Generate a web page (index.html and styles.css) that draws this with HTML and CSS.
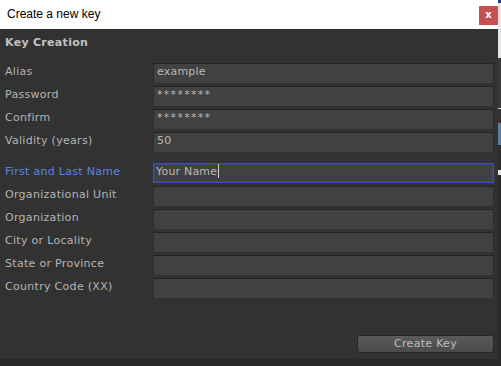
FILE: index.html
```html
<!DOCTYPE html>
<html lang="en">
<head>
  <meta charset="UTF-8" />
  <title>Create a new key</title>
  <link rel="stylesheet" href="styles.css">
</head>
<body>

<div class="desktop">
  <div class="window">
    <!-- Titelleiste -->
    <div class="titlebar">
      <span class="title">Create a new key</span>
      <div class="close" aria-label="Close">x</div>
    </div>

    <div class="content">
      <div class="section-title">Key Creation</div>

      <div class="row">
        <label>Alias</label>
        <div class="field">example</div>
      </div>
      <div class="row">
        <label>Password</label>
        <div class="field secret">********</div>
      </div>
      <div class="row">
        <label>Confirm</label>
        <div class="field secret">********</div>
      </div>
      <div class="row">
        <label>Validity (years)</label>
        <div class="field">50</div>
      </div>

      <div class="row spaced">
        <label class="active">First and Last Name</label>
        <div class="field focused">Your Name<span class="caret"></span></div>
      </div>
      <div class="row">
        <label>Organizational Unit</label>
        <div class="field"></div>
      </div>
      <div class="row">
        <label>Organization</label>
        <div class="field"></div>
      </div>
      <div class="row">
        <label>City or Locality</label>
        <div class="field"></div>
      </div>
      <div class="row">
        <label>State or Province</label>
        <div class="field"></div>
      </div>
      <div class="row">
        <label>Country Code (XX)</label>
        <div class="field"></div>
      </div>

      <div class="actions">
        <button class="btn">Create Key</button>
      </div>
    </div>

    <div class="bottom-edge"></div>
  </div>

  <!-- Fenster dahinter, schmaler Rand -->
  <div class="behind"></div>
</div>

</body>
</html>
```

FILE: styles.css
```css
* {
  box-sizing: border-box;
}
body {
  margin: 0;
  background: #2b2b2b;
  font-family: "DejaVu Sans", sans-serif;
  font-size: 11px;
}

.desktop {
  display: flex;
  height: 366px;
  width: 501px;
}

.window {
  width: 498px;
  display: flex;
  flex-direction: column;
}

.behind {
  width: 3px;
  background: linear-gradient(to bottom,
    #1b3c9a 0, #1b3c9a 3px,
    #e6e6e6 3px, #e6e6e6 58px,
    #3a3a3a 58px, #3a3a3a 108px,
    #d0d0d0 108px, #d0d0d0 109px,
    #333 109px, #333 123px,
    #5d7ea6 123px, #5d7ea6 145px,
    #2c2c2c 145px, #2c2c2c 170px,
    #e0e0e0 170px, #e0e0e0 175px,
    #2a2a2a 175px);
}

/* Titelleiste */
.titlebar {
  height: 29px;
  background: #fff;
  display: flex;
  align-items: flex-start;
  justify-content: space-between;
  padding-left: 7px;
}
.title {
  font-family: "Liberation Sans", Arial, sans-serif;
  font-size: 12px;
  color: #000;
  line-height: 16px;
  margin-top: 6px;
}
.close {
  width: 19px;
  height: 19px;
  margin-top: 6px;
  background: #c75050;
  color: #fff;
  font-family: "DejaVu Sans", sans-serif;
  font-weight: bold;
  font-size: 10px;
  line-height: 17px;
  text-align: center;
}

/* Inhalt */
.content {
  flex: 1;
  background: #323232;
  padding: 0 4px 0 5px;
  display: flex;
  flex-direction: column;
}

.section-title {
  font-weight: bold;
  color: #c2c2c2;
  line-height: 16px;
  padding-top: 6px;
  margin-bottom: 12px;
  letter-spacing: 0.3px;
}

.row {
  display: grid;
  grid-template-columns: 148px 1fr;
  height: 20px;
  margin-bottom: 3px;
}
.row.spaced {
  margin-top: 8px;
}
.row label {
  color: #b4b4b4;
  line-height: 16px;
  padding-top: 1px;
  letter-spacing: 0.3px;
  white-space: nowrap;
}
.row label.active {
  color: #5a86ea;
}

.field {
  background: #414141;
  border-top: 1px solid #242424;
  border-left: 1px solid #2e2e2e;
  border-right: 1px solid #2e2e2e;
  color: #b8b8b8;
  line-height: 16px;
  padding-left: 3px;
  letter-spacing: 0.2px;
  white-space: nowrap;
}
.field.secret {
  letter-spacing: 1.3px;
}
.field.focused {
  border: 1px solid #3550c8;
  box-shadow: inset 0 0 0 1px rgba(53, 80, 200, 0.35);
  padding-left: 2px;
}
.caret {
  display: inline-block;
  width: 1px;
  height: 14px;
  background: #d0d0d0;
  vertical-align: -3px;
  margin-left: 1px;
}

.actions {
  margin-top: auto;
  display: flex;
  justify-content: flex-end;
  padding-bottom: 6px;
}
.btn {
  width: 137px;
  height: 18px;
  border: 1px solid #262626;
  border-radius: 3px;
  background: linear-gradient(to bottom, #5a5a5a, #4b4b4b);
  color: #bdbdbd;
  font-family: "DejaVu Sans", sans-serif;
  font-size: 11px;
  line-height: 14px;
  padding: 0;
  letter-spacing: 0.3px;
}

.bottom-edge {
  height: 7px;
  background: #292929;
}
```
